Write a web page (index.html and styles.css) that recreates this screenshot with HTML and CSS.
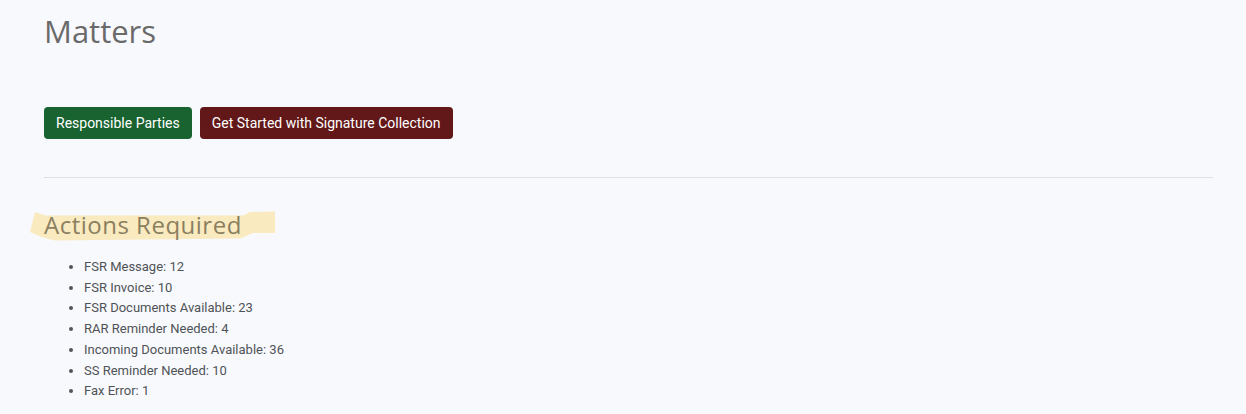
FILE: index.html
```html
<!DOCTYPE html>
<html lang="en">
<head>
<meta charset="utf-8">
<title>Matters</title>
<link rel="stylesheet" href="styles.css">
</head>
<body>
<main class="page">
  <h1 class="title">Matters</h1>
  <div class="actions">
    <button class="btn btn-green" type="button">Responsible Parties</button>
    <button class="btn btn-red" type="button">Get Started with Signature Collection</button>
  </div>
  <hr class="divider">
  <section class="required">
    <div class="heading-wrap">
      <svg class="highlight" width="250" height="32" viewBox="0 0 250 32" aria-hidden="true">
        <path d="M7 3 L17 6.5 L215 6.5 L222 3 L247 2.5 L247 24 L225 24 Q218 27 212 29.5 L27 31.5 Q14 29 2 23 Z" fill="#faeac0"/>
      </svg>
      <h2 class="subtitle">Actions Required</h2>
    </div>
    <ul class="items">
      <li>FSR Message: 12</li>
      <li>FSR Invoice: 10</li>
      <li>FSR Documents Available: 23</li>
      <li>RAR Reminder Needed: 4</li>
      <li>Incoming Documents Available: 36</li>
      <li>SS Reminder Needed: 10</li>
      <li>Fax Error: 1</li>
    </ul>
  </section>
</main>
</body>
</html>
```
FILE: styles.css
```css
html, body {
  margin: 0;
  padding: 0;
  background: #f8f9fd;
}

.page {
  padding: 0 33px 0 44px;
  font-family: Roboto, "Liberation Sans", sans-serif;
}

.title {
  font-family: "Open Sans", sans-serif;
  font-weight: 400;
  font-size: 31px;
  line-height: 38px;
  color: #6a6a6a;
  margin: 0;
  padding-top: 12px;
}

.actions {
  display: flex;
  gap: 8px;
  margin-top: 57px;
}

.btn {
  font-family: Roboto, "Liberation Sans", sans-serif;
  font-size: 14px;
  color: #fff;
  border: none;
  border-radius: 4px;
  height: 32px;
  padding: 0 12px;
  cursor: pointer;
}

.btn-green {
  background: #186330;
}

.btn-red {
  background: #621818;
}

.divider {
  border: none;
  border-top: 1px solid #dcdfe4;
  margin: 38px 0 0 0;
}

.heading-wrap {
  position: relative;
  margin-top: 32px;
}

.highlight {
  position: absolute;
  left: -16px;
  top: -1px;
}

.subtitle {
  position: relative;
  margin: 0;
  font-family: "Open Sans", sans-serif;
  font-weight: 400;
  font-size: 24px;
  letter-spacing: 0.5px;
  line-height: 30px;
  color: #8a7f5f;
}

.items {
  margin: 17px 0 0 0;
  padding-left: 40px;
  font-size: 13px;
  line-height: 20.7px;
  color: #4f5357;
}

.items li::marker {
  color: #555;
}
```
